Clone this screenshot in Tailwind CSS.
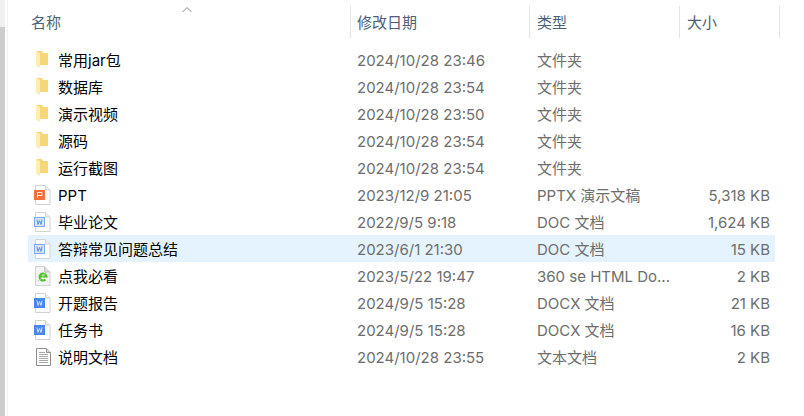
<!DOCTYPE html>
<html lang="zh">
<head>
  <meta charset="UTF-8" />
  <title>文件列表</title>
  <script src="https://cdn.jsdelivr.net/npm/@tailwindcss/browser@4"></script>
</head>
<body class="bg-white h-[416px] w-[804px] overflow-hidden flex font-['Inter','Noto_Sans_CJK_SC',sans-serif] text-[15px]">
  <!-- scrollbar strip -->
  <div class="w-[7px] h-full shrink-0">
    <div class="w-[5px] h-full bg-[#f0f0f0] flex flex-col">
      <div class="h-[27px]"></div>
      <div class="flex-1 bg-[#cdcdcd]"></div>
    </div>
  </div>

  <div class="flex-1 relative border-l border-[#f0f0f0]">
    <svg class="absolute left-[174px] top-[7px]" width="10" height="5" viewBox="0 0 10 5" fill="none"><path d="M.5 5L5 .5L9.500 5" stroke="#8a8a8a"/></svg>

    <!-- column headers -->
    <div class="flex h-[32px] mt-[6px] text-[#4c607a]">
      <div class="w-[342px] pl-[23px] leading-[33px]">名称</div>
      <div class="w-[179px] pl-[6px] leading-[33px] border-l border-[#e5e5e5]">修改日期</div>
      <div class="w-[150px] pl-[7px] leading-[33px] border-l border-[#e5e5e5]">类型</div>
      <div class="w-[101px] pl-[7px] leading-[33px] border-l border-r border-[#e5e5e5]">大小</div>
    </div>

    <!-- rows -->
    <div class="mt-[8px] ml-[20px] w-[747px] flex flex-col text-[#6d6d6d] [&>div>div:not(:first-child)]:pt-[4px]">
      <div class="flex h-[27px] items-center">
        <div class="w-[30px] pl-[8px]"><svg class="block" width="12" height="17" viewBox="0 0 12 17"><path d="M0 0h6l1 2h5v12H0z" fill="#f7d67a"/><path d="M0 0l4 2v15l-4-2z" fill="#fdeeb4"/></svg></div>
        <div class="w-[299px] text-black">常用jar包</div><div class="w-[180px]">2024/10/28 23:46</div><div class="w-[140px]">文件夹</div>
      </div>
      <div class="flex h-[27px] items-center">
        <div class="w-[30px] pl-[8px]"><svg class="block" width="12" height="17" viewBox="0 0 12 17"><path d="M0 0h6l1 2h5v12H0z" fill="#f7d67a"/><path d="M0 0l4 2v15l-4-2z" fill="#fdeeb4"/></svg></div>
        <div class="w-[299px] text-black">数据库</div><div class="w-[180px]">2024/10/28 23:54</div><div class="w-[140px]">文件夹</div>
      </div>
      <div class="flex h-[27px] items-center">
        <div class="w-[30px] pl-[8px]"><svg class="block" width="12" height="17" viewBox="0 0 12 17"><path d="M0 0h6l1 2h5v12H0z" fill="#f7d67a"/><path d="M0 0l4 2v15l-4-2z" fill="#fdeeb4"/></svg></div>
        <div class="w-[299px] text-black">演示视频</div><div class="w-[180px]">2024/10/28 23:50</div><div class="w-[140px]">文件夹</div>
      </div>
      <div class="flex h-[27px] items-center">
        <div class="w-[30px] pl-[8px]"><svg class="block" width="12" height="17" viewBox="0 0 12 17"><path d="M0 0h6l1 2h5v12H0z" fill="#f7d67a"/><path d="M0 0l4 2v15l-4-2z" fill="#fdeeb4"/></svg></div>
        <div class="w-[299px] text-black">源码</div><div class="w-[180px]">2024/10/28 23:54</div><div class="w-[140px]">文件夹</div>
      </div>
      <div class="flex h-[27px] items-center">
        <div class="w-[30px] pl-[8px]"><svg class="block" width="12" height="17" viewBox="0 0 12 17"><path d="M0 0h6l1 2h5v12H0z" fill="#f7d67a"/><path d="M0 0l4 2v15l-4-2z" fill="#fdeeb4"/></svg></div>
        <div class="w-[299px] text-black">运行截图</div><div class="w-[180px]">2024/10/28 23:54</div><div class="w-[140px]">文件夹</div>
      </div>
      <div class="flex h-[27px] items-center">
        <div class="w-[30px] pl-[6px]"><svg class="block" width="17" height="20" viewBox="0 0 17 20"><path d="M1.500.5h10l4.500 4.500v14.500h-14.500z" fill="#fff" stroke="#d2d2d2"/><path d="M11.500.5v4.500h4.500" fill="#efefef" stroke="#d2d2d2"/><rect x="0" y="5" width="11" height="10" fill="#f4703a"/><path d="M3.500 13V7.500h4.500v3H3.500" fill="none" stroke="#fde0d2"/></svg></div>
        <div class="w-[299px] text-black">PPT</div><div class="w-[180px]">2023/12/9 21:05</div><div class="w-[140px]">PPTX 演示文稿</div><div class="w-[93px] text-right">5,318 KB</div>
      </div>
      <div class="flex h-[27px] items-center">
        <div class="w-[30px] pl-[6px]"><svg class="block" width="17" height="20" viewBox="0 0 17 20"><path d="M1.500.5h10l4.500 4.500v14.500h-14.500z" fill="#fff" stroke="#d2d2d2"/><path d="M11.500.5v4.500h4.500" fill="#efefef" stroke="#d2d2d2"/><rect x=".5" y="5.500" width="10" height="9" fill="#d8e6fc" stroke="#7eaaf0"/><path d="M3 7.500l1 5 1.500-4 1.500 4 1-5" fill="none" stroke="#5a90e4"/></svg></div>
        <div class="w-[299px] text-black">毕业论文</div><div class="w-[180px]">2022/9/5 9:18</div><div class="w-[140px]">DOC 文档</div><div class="w-[93px] text-right">1,624 KB</div>
      </div>
      <div class="flex h-[27px] items-center bg-[#e5f3ff]">
        <div class="w-[30px] pl-[6px]"><svg class="block" width="17" height="20" viewBox="0 0 17 20"><path d="M1.500.5h10l4.500 4.500v14.500h-14.500z" fill="#fff" stroke="#d2d2d2"/><path d="M11.500.5v4.500h4.500" fill="#efefef" stroke="#d2d2d2"/><rect x=".5" y="5.500" width="10" height="9" fill="#d8e6fc" stroke="#7eaaf0"/><path d="M3 7.500l1 5 1.500-4 1.500 4 1-5" fill="none" stroke="#5a90e4"/></svg></div>
        <div class="w-[299px] text-black">答辩常见问题总结</div><div class="w-[180px]">2023/6/1 21:30</div><div class="w-[140px]">DOC 文档</div><div class="w-[93px] text-right">15 KB</div>
      </div>
      <div class="flex h-[27px] items-center">
        <div class="w-[30px] pl-[6px]"><svg class="block" width="17" height="20" viewBox="0 0 17 20"><path d="M1.500.5h9l5.500 5.500v13.500h-14.500z" fill="#f3f3f3" stroke="#d2d2d2"/><path d="M10.500.5v5.500h5.500" fill="#dcdcdc" stroke="#c4c4c4"/><path d="M5.500 10.500h7a3.500 3.500 0 1 0-1 3" fill="none" stroke="#4fc02a" stroke-width="2"/><path d="M3.500 15c2-.5 6-4 8-9" fill="none" stroke="#a6e08e"/></svg></div>
        <div class="w-[299px] text-black">点我必看</div><div class="w-[180px]">2023/5/22 19:47</div><div class="w-[140px] whitespace-nowrap">360 se HTML Do...</div><div class="w-[93px] text-right">2 KB</div>
      </div>
      <div class="flex h-[27px] items-center">
        <div class="w-[30px] pl-[6px]"><svg class="block" width="17" height="20" viewBox="0 0 17 20"><path d="M1.500.5h10l4.500 4.500v14.500h-14.500z" fill="#fff" stroke="#d2d2d2"/><path d="M11.500.5v4.500h4.500" fill="#efefef" stroke="#d2d2d2"/><rect x="0" y="5" width="11" height="10" fill="#4a86e8"/><path d="M3 7.500l1 5 1.500-4 1.500 4 1-5" fill="none" stroke="#cfe0fb"/></svg></div>
        <div class="w-[299px] text-black">开题报告</div><div class="w-[180px]">2024/9/5 15:28</div><div class="w-[140px]">DOCX 文档</div><div class="w-[93px] text-right">21 KB</div>
      </div>
      <div class="flex h-[27px] items-center">
        <div class="w-[30px] pl-[6px]"><svg class="block" width="17" height="20" viewBox="0 0 17 20"><path d="M1.500.5h10l4.500 4.500v14.500h-14.500z" fill="#fff" stroke="#d2d2d2"/><path d="M11.500.5v4.500h4.500" fill="#efefef" stroke="#d2d2d2"/><rect x="0" y="5" width="11" height="10" fill="#4a86e8"/><path d="M3 7.500l1 5 1.500-4 1.500 4 1-5" fill="none" stroke="#cfe0fb"/></svg></div>
        <div class="w-[299px] text-black">任务书</div><div class="w-[180px]">2024/9/5 15:28</div><div class="w-[140px]">DOCX 文档</div><div class="w-[93px] text-right">16 KB</div>
      </div>
      <div class="flex h-[27px] items-center">
        <div class="w-[30px] pl-[8px]"><svg class="block" width="15" height="18" viewBox="0 0 15 18"><path d="M.5.500h10l4 4v13H.5z" fill="#fff" stroke="#8e8e8e"/><path d="M10.500.5v4h4" fill="#ddd" stroke="#8e8e8e"/><path d="M3 4.500h6M3 6.500h9M3 8.500h9M3 10.500h9M3 12.500h9M3 14.500h9" stroke="#a8a8a8"/></svg></div>
        <div class="w-[299px] text-black">说明文档</div><div class="w-[180px]">2024/10/28 23:55</div><div class="w-[140px]">文本文档</div><div class="w-[93px] text-right">2 KB</div>
      </div>
    </div>
  </div>
</body>
</html>
